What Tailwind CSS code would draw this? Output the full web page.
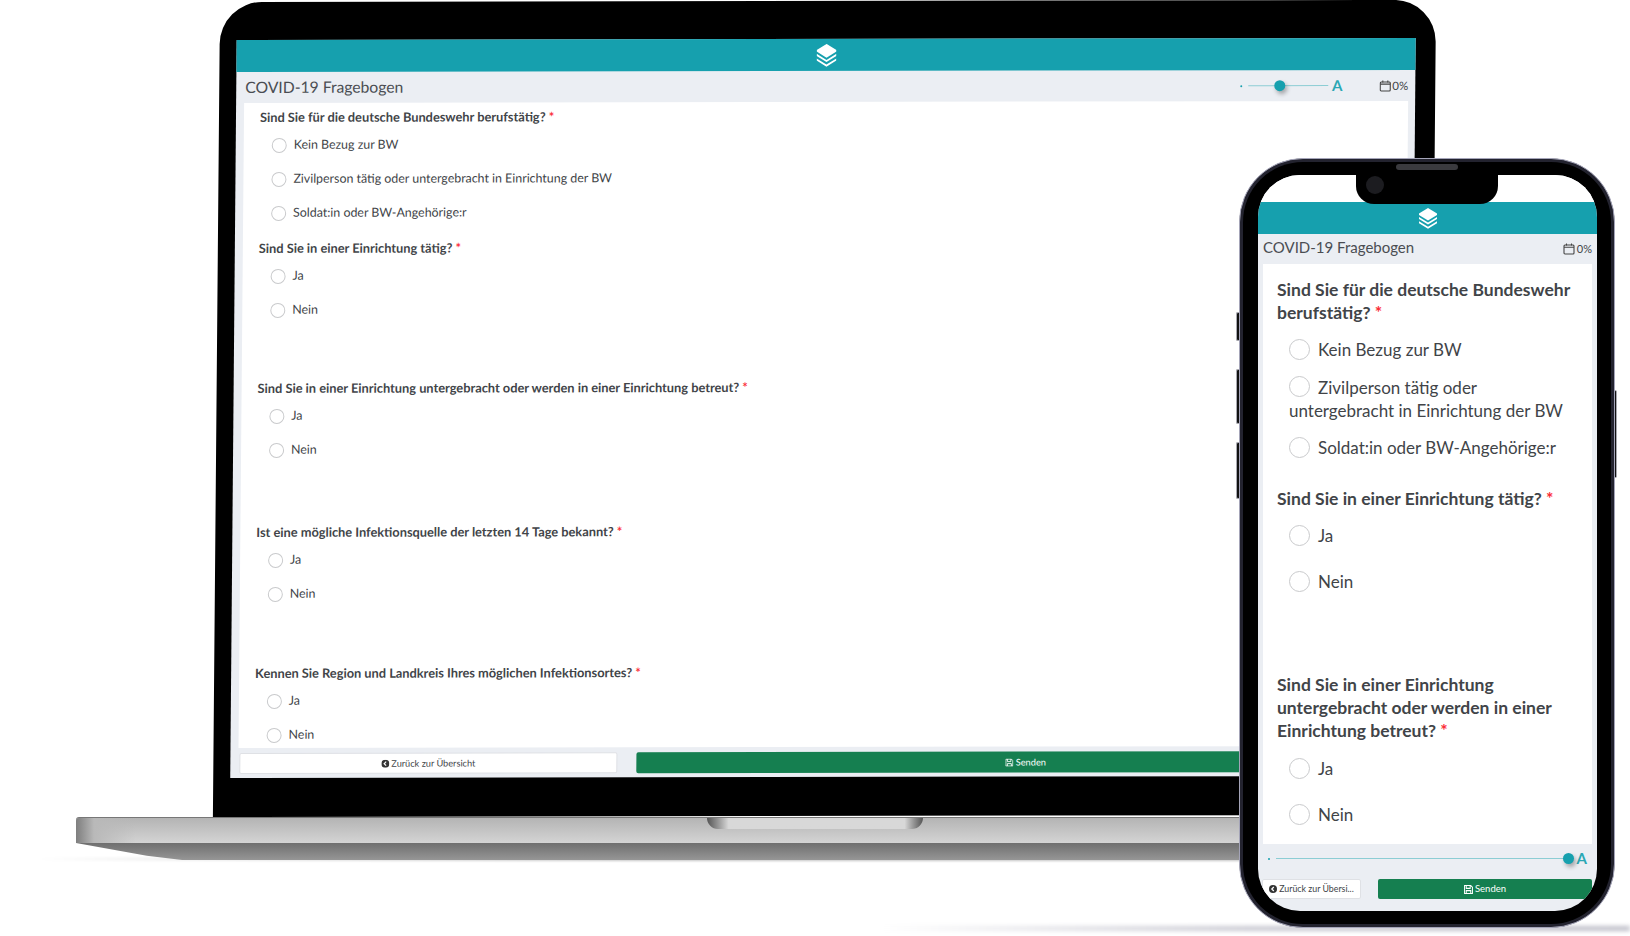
<!DOCTYPE html>
<html lang="de">
<head>
    <meta charset="UTF-8">
    <title>COVID-19 Fragebogen</title>
    <script src="https://cdn.jsdelivr.net/npm/@tailwindcss/browser@4"></script>
</head>
<body class="bg-white">
<div class="relative w-[1630px] h-[936px] overflow-hidden bg-white font-['Lato',sans-serif] text-[#414448]">

    <!-- shadows on the floor -->
    <div class="absolute left-[40px] top-[857px] w-[1220px] h-[4px] bg-gradient-to-r from-white via-[#c4c4c4] to-[#c4c4c4] blur-[1px]"></div>
    <div class="absolute left-[880px] top-[926px] w-[750px] h-[5px] bg-gradient-to-r from-white via-[#c9c9d2] to-[#c0c0ca] blur-[2px]"></div>

    <!-- Laptop base -->
    <div class="absolute left-[76px] top-[817px] w-[1180px] h-[43px]">
        <div class="relative h-[26px] rounded-tl-[3px] border-t border-[#777] bg-gradient-to-b from-[#b4b4b4] to-[#d4d4d4]">
            <div class="absolute left-0 top-0 w-[60px] h-full rounded-tl-[3px] bg-gradient-to-r from-[#7e7e7e] via-[#b9b9b9] via-30% to-transparent"></div>
            <div class="absolute left-[631px] top-0 w-[216px] h-[11px] rounded-b-[14px] bg-gradient-to-r from-[#555] via-[#d8d8d8] via-10% to-[#d8d8d8]"></div>
            <div class="absolute left-[755px] top-0 w-[92px] h-[11px] rounded-br-[14px] bg-gradient-to-r from-[#d8d8d8] from-80% to-[#555]"></div>
        </div>
        <div class="h-[17px] bg-gradient-to-b from-[#6f6f6f] to-[#969696] [clip-path:polygon(0_0,100%_0,100%_100%,9%_100%,6%_75%)]"></div>
    </div>

    <!-- Laptop lid -->
    <div class="absolute left-[220px] top-[2px] w-[1216px] h-[815px] bg-black rounded-t-[42px] origin-top-left -skew-x-[0.5deg] -skew-y-[0.1deg]">
        <div class="ml-[17px] mt-[38px] w-[1179px] h-[738px] bg-[#ebeef3] flex flex-col">
            <div class="h-[32px] bg-[#16a0ae] flex items-center justify-center shrink-0">
                <svg class="w-[20px] h-[23px]" viewBox="0 0 18 21" fill="#fff"><path d="M9 0 18 5.5V7L9 12.5 0 7V5.5Z"/><path d="M0 9 9 14.6 18 9V11L9 16.6 0 11Z"/><path d="M0 13.2 9 18.8 18 13.2V15.2L9 20.8 0 15.2Z"/></svg>
            </div>
            <div class="h-[31px] flex items-center pl-[9px] pr-[7px] shrink-0">
                <h1 class="text-[15.7px] text-[#4a4d52]">COVID-19 Fragebogen</h1>
                <div class="ml-auto flex items-center">
                    <span class="w-[2px] h-[2px] rounded-full bg-[#16a0ae]"></span>
                    <div class="relative ml-[6px] w-[80px] h-px bg-[#8ccdd4]">
                        <span class="absolute left-[26px] -top-[5px] w-[11px] h-[11px] rounded-full bg-[#16a0ae] shadow-[2px_3px_4px_rgba(0,0,0,0.3)]"></span>
                    </div>
                    <span class="ml-[4px] text-[15px] font-bold leading-none text-[#2aa7b4]">A</span>
                    <svg class="ml-[37px] w-[12px] h-[12px]" viewBox="0 0 12 12" fill="none" stroke="#444" stroke-width="1.1"><rect x="1" y="2" width="10" height="9" rx="1"/><path d="M1 4.2H11M3.5 .5V2.5M8.5 .5V2.5"/></svg>
                    <span class="ml-[1px] text-[11.5px]">0%</span>
                </div>
            </div>
            <div class="flex-1 min-h-0 ml-[8px] mr-[7px] bg-white overflow-hidden pt-[6px] pl-[16px]">
                <p class="h-[16px] leading-[16px] text-[12.8px] font-bold">Sind Sie für die deutsche Bundeswehr berufstätig? <span class="text-red-500">*</span></p>
                <div class="mt-[3px] pl-[12px] text-[12.4px]">
                    <label class="h-[34px] flex items-center gap-[7px]"><span class="w-[15px] h-[15px] rounded-full border border-[#c9cacc] bg-white"></span>Kein Bezug zur BW</label>
                    <label class="h-[34px] flex items-center gap-[7px]"><span class="w-[15px] h-[15px] rounded-full border border-[#c9cacc] bg-white"></span>Zivilperson tätig oder untergebracht in Einrichtung der BW</label>
                    <label class="h-[34px] flex items-center gap-[7px]"><span class="w-[15px] h-[15px] rounded-full border border-[#c9cacc] bg-white"></span>Soldat:in oder BW-Angehörige:r</label>
                </div>
                <p class="mt-[10px] h-[16px] leading-[16px] text-[12.8px] font-bold">Sind Sie in einer Einrichtung tätig? <span class="text-red-500">*</span></p>
                <div class="mt-[3px] pl-[12px] text-[12.4px]">
                    <label class="h-[34px] flex items-center gap-[7px]"><span class="w-[15px] h-[15px] rounded-full border border-[#c9cacc] bg-white"></span>Ja</label>
                    <label class="h-[34px] flex items-center gap-[7px]"><span class="w-[15px] h-[15px] rounded-full border border-[#c9cacc] bg-white"></span>Nein</label>
                </div>
                <p class="mt-[53px] h-[16px] leading-[16px] text-[12.8px] font-bold">Sind Sie in einer Einrichtung untergebracht oder werden in einer Einrichtung betreut? <span class="text-red-500">*</span></p>
                <div class="mt-[3px] pl-[12px] text-[12.4px]">
                    <label class="h-[34px] flex items-center gap-[7px]"><span class="w-[15px] h-[15px] rounded-full border border-[#c9cacc] bg-white"></span>Ja</label>
                    <label class="h-[34px] flex items-center gap-[7px]"><span class="w-[15px] h-[15px] rounded-full border border-[#c9cacc] bg-white"></span>Nein</label>
                </div>
                <p class="mt-[57px] h-[16px] leading-[16px] text-[12.8px] font-bold">Ist eine mögliche Infektionsquelle der letzten 14 Tage bekannt? <span class="text-red-500">*</span></p>
                <div class="mt-[3px] pl-[12px] text-[12.4px]">
                    <label class="h-[34px] flex items-center gap-[7px]"><span class="w-[15px] h-[15px] rounded-full border border-[#c9cacc] bg-white"></span>Ja</label>
                    <label class="h-[34px] flex items-center gap-[7px]"><span class="w-[15px] h-[15px] rounded-full border border-[#c9cacc] bg-white"></span>Nein</label>
                </div>
                <p class="mt-[54px] h-[16px] leading-[16px] text-[12.8px] font-bold">Kennen Sie Region und Landkreis Ihres möglichen Infektionsortes? <span class="text-red-500">*</span></p>
                <div class="mt-[3px] pl-[12px] text-[12.4px]">
                    <label class="h-[34px] flex items-center gap-[7px]"><span class="w-[15px] h-[15px] rounded-full border border-[#c9cacc] bg-white"></span>Ja</label>
                    <label class="h-[34px] flex items-center gap-[7px]"><span class="w-[15px] h-[15px] rounded-full border border-[#c9cacc] bg-white"></span>Nein</label>
                </div>
            </div>
            <div class="h-[30px] pt-[5px] pb-[4px] pl-[9px] flex gap-[19px] shrink-0 text-[9.2px]">
                <button class="w-[378px] bg-white border border-[#dfe1e5] rounded-[2px] flex items-center justify-center gap-[2px]">
                    <svg class="w-[8px] h-[8px]" viewBox="0 0 8 8"><circle cx="4" cy="4" r="4" fill="#333"/><path d="M4.8 2 2.8 4 4.8 6" fill="none" stroke="#fff" stroke-width="1.2"/></svg>
                    Zurück zur Übersicht
                </button>
                <button class="flex-1 -mr-[6px] bg-[#157f50] text-white rounded-[2px] flex items-center justify-center gap-[2px]">
                    <svg class="w-[8px] h-[8px]" viewBox="0 0 8 8" fill="none" stroke="#fff" stroke-width=".9"><path d="M.5.5H6L7.5 2V7.5H.5Z"/><path d="M2 .5V3H5.5V.5M2 7.5V5H6V7.5"/></svg>
                    Senden
                </button>
            </div>
        </div>
    </div>

    <!-- Phone side buttons -->
    <div class="absolute left-[1236px] top-[312px] w-[5px] h-[29px] bg-[#111] border-l border-y border-[#a8a8b0] rounded-l-[2px]"></div>
    <div class="absolute left-[1236px] top-[369px] w-[5px] h-[55px] bg-[#111] border-l border-y border-[#a8a8b0] rounded-l-[2px]"></div>
    <div class="absolute left-[1236px] top-[442px] w-[5px] h-[57px] bg-[#111] border-l border-y border-[#a8a8b0] rounded-l-[2px]"></div>
    <div class="absolute left-[1612px] top-[390px] w-[5px] h-[88px] bg-[#111] border-r border-y border-[#a8a8b0] rounded-r-[2px]"></div>

    <!-- Phone -->
    <div class="absolute left-[1239px] top-[158px] w-[376px] h-[770px] rounded-[64px] p-[3px] border border-[#a4a4b8] bg-[#23232f]">
        <div class="relative w-full h-full rounded-[60px] bg-black pt-[13px] pl-[15px] pr-[14px] pb-[13px]">
            <div class="relative w-full h-full rounded-[42px] overflow-hidden bg-[#ebeef3] flex flex-col">
                <div class="h-[27px] bg-white shrink-0"></div>
                <div class="h-[32px] bg-[#16a0ae] flex items-center justify-center shrink-0">
                    <svg class="w-[18px] h-[21px]" viewBox="0 0 18 21" fill="#fff"><path d="M9 0 18 5.5V7L9 12.5 0 7V5.5Z"/><path d="M0 9 9 14.6 18 9V11L9 16.6 0 11Z"/><path d="M0 13.2 9 18.8 18 13.2V15.2L9 20.8 0 15.2Z"/></svg>
                </div>
                <div class="h-[30px] flex items-center pl-[5px] pr-[5px] shrink-0">
                    <h2 class="-mt-[3px] text-[15px] text-[#4a4d52]">COVID-19 Fragebogen</h2>
                    <div class="ml-auto flex items-center">
                        <svg class="w-[12px] h-[12px]" viewBox="0 0 12 12" fill="none" stroke="#444" stroke-width="1.1"><rect x="1" y="2" width="10" height="9" rx="1"/><path d="M1 4.2H11M3.5 .5V2.5M8.5 .5V2.5"/></svg>
                        <span class="ml-[2px] text-[11px]">0%</span>
                    </div>
                </div>
                <div class="flex-1 min-h-0 mx-[5px] bg-white overflow-hidden pl-[14px] pr-[10px] pt-[14px]">
                    <p class="text-[17.5px] leading-[23px] font-bold">Sind Sie für die deutsche Bundeswehr berufstätig? <span class="text-red-500">*</span></p>
                    <div class="mt-[14px] pl-[12px] text-[17px] leading-[23px]">
                        <label class="flex items-center gap-[8px] h-[23px]"><span class="w-[21px] h-[21px] rounded-full border border-[#c9cacc]"></span>Kein Bezug zur BW</label>
                        <label class="block mt-[15px] h-[46px]"><span class="inline-block align-[-3px] w-[21px] h-[21px] rounded-full border border-[#c9cacc] mr-[8px]"></span>Zivilperson tätig oder untergebracht in Einrichtung der BW</label>
                        <label class="flex items-center gap-[8px] h-[23px] mt-[14px]"><span class="w-[21px] h-[21px] rounded-full border border-[#c9cacc]"></span>Soldat:in oder BW-Angehörige:r</label>
                    </div>
                    <p class="mt-[28px] text-[17.5px] leading-[23px] font-bold">Sind Sie in einer Einrichtung tätig? <span class="text-red-500">*</span></p>
                    <div class="mt-[14px] pl-[12px] text-[17px] leading-[23px]">
                        <label class="flex items-center gap-[8px] h-[23px]"><span class="w-[21px] h-[21px] rounded-full border border-[#c9cacc]"></span>Ja</label>
                        <label class="flex items-center gap-[8px] h-[23px] mt-[23px]"><span class="w-[21px] h-[21px] rounded-full border border-[#c9cacc]"></span>Nein</label>
                    </div>
                    <p class="mt-[80px] text-[17.5px] leading-[23px] font-bold">Sind Sie in einer Einrichtung untergebracht oder werden in einer Einrichtung betreut? <span class="text-red-500">*</span></p>
                    <div class="mt-[15px] pl-[12px] text-[17px] leading-[23px]">
                        <label class="flex items-center gap-[8px] h-[23px]"><span class="w-[21px] h-[21px] rounded-full border border-[#c9cacc]"></span>Ja</label>
                        <label class="flex items-center gap-[8px] h-[23px] mt-[23px]"><span class="w-[21px] h-[21px] rounded-full border border-[#c9cacc]"></span>Nein</label>
                    </div>
                </div>
                <div class="h-[29px] flex items-center pl-[10px] pr-[10px] shrink-0">
                    <span class="w-[2px] h-[2px] rounded-full bg-[#16a0ae]"></span>
                    <div class="relative ml-[6px] flex-1 h-px bg-[#8ccdd4]">
                        <span class="absolute right-0 -top-[5px] w-[11px] h-[11px] rounded-full bg-[#16a0ae] shadow-[2px_3px_4px_rgba(0,0,0,0.3)]"></span>
                    </div>
                    <span class="ml-[3px] text-[15px] font-bold leading-none text-[#2aa7b4]">A</span>
                </div>
                <div class="mt-[6px] h-[20px] pl-[4px] pr-[5px] flex gap-[17px] shrink-0 text-[8.8px]">
                    <button class="w-[99px] bg-white border border-[#dfe1e5] rounded-[2px] flex items-center justify-center gap-[2px] whitespace-nowrap">
                        <svg class="w-[8px] h-[8px]" viewBox="0 0 8 8"><circle cx="4" cy="4" r="4" fill="#333"/><path d="M4.8 2 2.8 4 4.8 6" fill="none" stroke="#fff" stroke-width="1.2"/></svg>
                        Zurück zur Übersi...
                    </button>
                    <button class="flex-1 bg-[#157f50] text-white rounded-[2px] flex items-center justify-center gap-[2px] text-[9.5px]">
                        <svg class="w-[9px] h-[9px]" viewBox="0 0 8 8" fill="none" stroke="#fff" stroke-width=".9"><path d="M.5.5H6L7.5 2V7.5H.5Z"/><path d="M2 .5V3H5.5V.5M2 7.5V5H6V7.5"/></svg>
                        Senden
                    </button>
                </div>
                <div class="h-[12px] shrink-0"></div>
            </div>
            <!-- notch -->
            <div class="absolute left-[113px] top-0 w-[142px] h-[42px] bg-black rounded-b-[18px]">
                <span class="absolute left-[40px] top-[2px] w-[62px] h-[6px] rounded-full bg-[#3a3a3e]"></span>
                <span class="absolute left-[10px] top-[14px] w-[18px] h-[18px] rounded-full bg-[#1c1c20]"></span>
            </div>
        </div>
    </div>
</div>
</body>
</html>
